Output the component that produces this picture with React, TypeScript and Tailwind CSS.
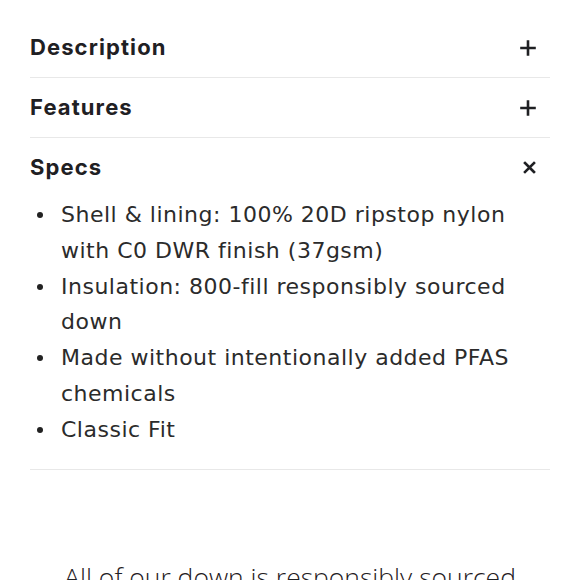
import React from 'react';

const specs = [
  'Shell & lining: 100% 20D ripstop nylon with C0 DWR finish (37gsm)',
  'Insulation: 800-fill responsibly sourced down',
  'Made without intentionally added PFAS chemicals',
  'Classic Fit',
];

const PlusIcon = () => (
  <svg width="16" height="16" viewBox="0 0 16 16" fill="none" stroke="#1f2023" strokeWidth="2.6" strokeLinecap="square">
    <path d="M8 1.5v13M1.5 8h13" />
  </svg>
);

const CloseIcon = () => (
  <svg width="13" height="13" viewBox="0 0 13 13" fill="none" stroke="#1f2023" strokeWidth="2.6" strokeLinecap="square">
    <path d="M2 2l9 9M11 2l-9 9" />
  </svg>
);

const Header: React.FC<{ title: string; open?: boolean }> = ({ title, open }) => (
  <div className="flex items-center justify-between h-[59px] pr-[14px]">
    <span className="text-[22px] font-bold text-[#1f2023] tracking-[1.1px]" style={{ fontFamily: 'Inter, sans-serif' }}>
      {title}
    </span>
    {open ? <CloseIcon /> : <PlusIcon />}
  </div>
);

export default function App() {
  return (
    <div className="w-[580px] h-[580px] overflow-hidden bg-white">
      <div className="mx-[30px] pt-[18px]">
        <Header title="Description" />
        <div className="h-px bg-[#e8e8e8]" />
        <Header title="Features" />
        <div className="h-px bg-[#e8e8e8]" />
        <Header title="Specs" open />
        <ul className="pb-[21px]" style={{ fontFamily: '"DejaVu Sans", sans-serif' }}>
          {specs.map((s) => (
            <li key={s} className="flex text-[22px] leading-[35.8px] text-[#2b2b2b] font-normal tracking-[0.5px]">
              <span className="w-[31px] shrink-0 pl-[7px] pt-[15px]">
                <span className="block w-[6px] h-[6px] rounded-full bg-[#222222]" />
              </span>
              <span>{s}</span>
            </li>
          ))}
        </ul>
        <div className="h-px bg-[#e8e8e8]" />
        <p className="mt-[88px] text-center text-[26.5px] font-light text-[#1f2023]" style={{ fontFamily: '"Open Sans", sans-serif' }}>
          All of our down is responsibly sourced
        </p>
      </div>
    </div>
  );
}
